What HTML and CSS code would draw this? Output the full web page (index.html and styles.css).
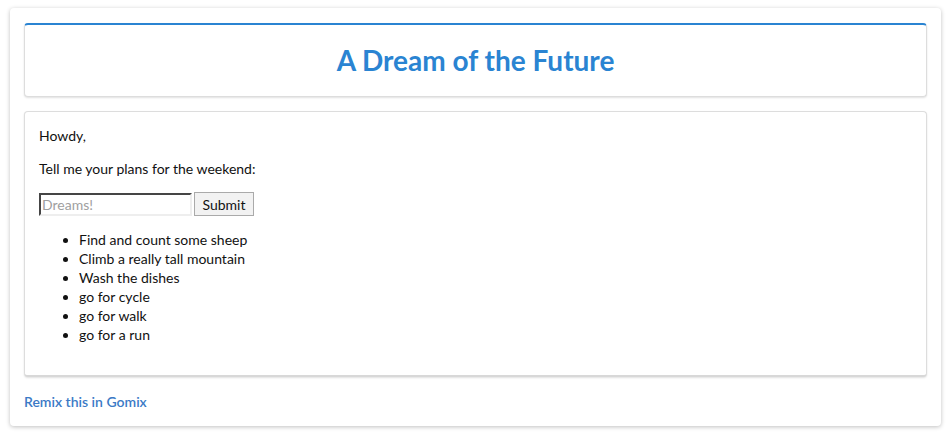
FILE: index.html
```html
<!DOCTYPE html>
<html>
<head>
<meta charset="utf-8">
<link rel="stylesheet" href="styles.css">
</head>
<body>
<div class="page">
  <header class="card head">
    <h1>A Dream of the Future</h1>
  </header>
  <main class="card body">
    <p>Howdy,</p>
    <p>Tell me your plans for the weekend:</p>
    <form class="form">
      <input type="text" placeholder="Dreams!">
      <button type="button">Submit</button>
    </form>
    <ul class="list">
      <li>Find and count some sheep</li>
      <li>Climb a really tall mountain</li>
      <li>Wash the dishes</li>
      <li>go for cycle</li>
      <li>go for walk</li>
      <li>go for a run</li>
    </ul>
  </main>
  <footer class="foot">
    <a href="#">Remix this in Gomix</a>
  </footer>
</div>
</body>
</html>
```
FILE: styles.css
```css
html, body { margin: 0; padding: 0; background: #fff; }
body {
  padding: 8px 11px 7px 10px;
  font-family: Lato, "Liberation Sans", sans-serif;
  font-size: 14px;
  color: #111;
}
.page {
  background: #fff;
  border-radius: 4px;
  box-shadow: 0 1px 4px rgba(0,0,0,0.25);
  padding: 15px 14px 16px 14px;
  display: flex;
  flex-direction: column;
  gap: 14px;
}
.card {
  background: #fff;
  border: 1px solid #ddd;
  border-radius: 4px;
  box-shadow: 0 1px 2px rgba(0,0,0,0.12);
}
.head {
  border-top: 2px solid #2a84d2;
  height: 71px;
  display: flex;
  align-items: center;
  justify-content: center;
}
.head h1 {
  margin: 0;
  font-size: 28px;
  font-weight: 700;
  color: #2a84d2;
  padding-bottom: 1px;
}
.body {
  padding: 14px 14px 26px 14px;
  border-bottom: 2px solid #d8d8d8;
  height: 223px;
}
.body p { margin: 0 0 14px 0; line-height: 19px; }
.form { display: flex; align-items: center; gap: 2px; margin: 0 0 14px 0; }
.form input {
  box-sizing: border-box;
  width: 153px;
  height: 23px;
  padding: 1px 1px;
  border: 2px inset #eee;
  border-top-color: #999;
  border-left-color: #999;
  font-family: Lato, sans-serif;
  font-size: 14px;
}
.form input::placeholder { color: #a0a0a0; }
.form button {
  box-sizing: border-box;
  width: 60px;
  height: 24px;
  padding: 0;
  border: 1px solid #aaa;
  background: #f2f2f2;
  font-family: Lato, sans-serif;
  font-size: 14px;
  color: #111;
}
.list { margin: 0; padding-left: 40px; }
.list li { line-height: 19px; }
.foot { padding-top: 2px; line-height: 17px; }
.foot a {
  color: #3b7ac6;
  text-decoration: none;
  font-weight: 600;
  font-size: 14px;
}
```
